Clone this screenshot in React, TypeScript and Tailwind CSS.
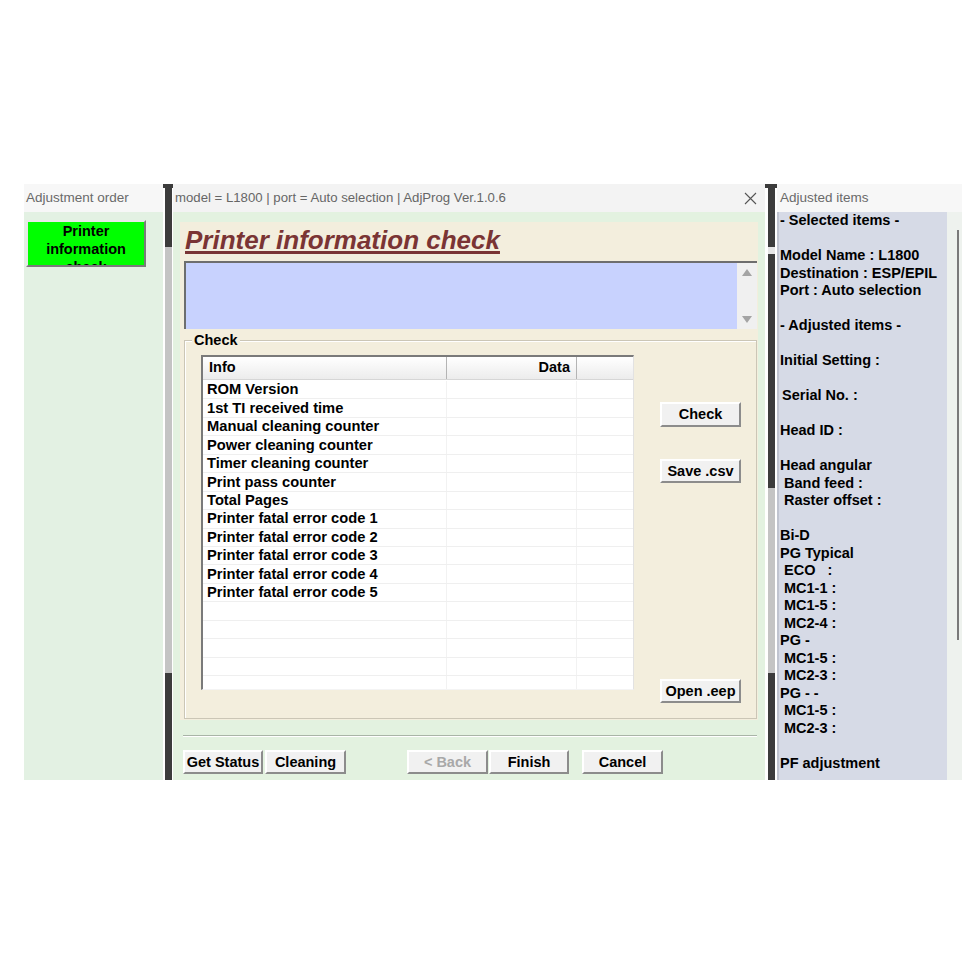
import React from "react";

const ITEMS = [
  "ROM Version",
  "1st TI received time",
  "Manual cleaning counter",
  "Power cleaning counter",
  "Timer cleaning counter",
  "Print pass counter",
  "Total Pages",
  "Printer fatal error code 1",
  "Printer fatal error code 2",
  "Printer fatal error code 3",
  "Printer fatal error code 4",
  "Printer fatal error code 5",
];

// [text, indent px]
const ADJUSTED: [string, number][] = [
  ["- Selected items -", 0],
  ["", 0],
  ["Model Name : L1800", 0],
  ["Destination : ESP/EPIL", 0],
  ["Port : Auto selection", 0],
  ["", 0],
  ["- Adjusted items -", 0],
  ["", 0],
  ["Initial Setting :", 0],
  ["", 0],
  ["Serial No. :", 2],
  ["", 0],
  ["Head ID :", 0],
  ["", 0],
  ["Head angular", 0],
  ["Band feed :", 4],
  ["Raster offset :", 4],
  ["", 0],
  ["Bi-D", 0],
  ["PG Typical", 0],
  ["ECO   :", 4],
  ["MC1-1 :", 4],
  ["MC1-5 :", 4],
  ["MC2-4 :", 4],
  ["PG -", 0],
  ["MC1-5 :", 4],
  ["MC2-3 :", 4],
  ["PG - -", 0],
  ["MC1-5 :", 4],
  ["MC2-3 :", 4],
  ["", 0],
  ["PF adjustment", 0],
];

const FONT = "font-['Liberation_Sans',Arial,sans-serif]";

function Btn({ label, w, className = "", disabled = false }: { label: string; w: string; className?: string; disabled?: boolean }) {
  return (
    <div
      className={`${w} h-[24px] flex items-center justify-center bg-[#f1f1f1] border-2 border-t-white border-l-white border-r-[#8c8c8c] border-b-[#8c8c8c] text-[14.5px] font-bold leading-none ${disabled ? "text-[#a8a8a8]" : "text-black"} ${className}`}
    >
      {label}
    </div>
  );
}

function Splitter({ w, thumb }: { w: string; thumb: boolean }) {
  return (
    <div className={`${w} flex flex-col items-center`}>
      <div className="w-full h-[4px] bg-[#3c3c3c]" />
      <div className="w-[7px] flex-1 flex flex-col">
        <div className="h-[59px] bg-[#3c3c3c]" />
        {thumb ? (
          <>
            <div className="h-[7px] bg-[#e6e6e6]" />
            <div className="h-[234px] bg-[#3c3c3c]" />
            <div className="h-[185px] bg-[#c4c4c4]" />
          </>
        ) : (
          <div className="h-[426px] bg-[#c4c4c4]" />
        )}
        <div className="flex-1 bg-[#3c3c3c]" />
      </div>
    </div>
  );
}

export default function App() {
  return (
    <div className={`w-[980px] h-[980px] bg-white ${FONT}`}>
      <div className="pt-[184px] pl-[24px]">
        <div className="flex w-[938px] h-[596px]">
          {/* Adjustment order */}
          <div className="w-[139px] flex flex-col">
            <div className="h-[28px] bg-[#f7f7f7] flex items-center pl-[2px] text-[13.5px] text-[#6a6a6a]">Adjustment order</div>
            <div className="flex-1 bg-[#e3f1e3] pt-[8px] pl-[2px]">
              <div className="w-[120px] h-[47px] overflow-hidden bg-[#00ff00] border-2 border-t-[#e8e8e8] border-l-[#e8e8e8] border-r-[#7a7a7a] border-b-[#7a7a7a] text-center text-[14.5px] font-bold leading-[18px] text-black">
                Printer
                <br />
                information
                <br />
                check
              </div>
            </div>
          </div>

          <Splitter w="w-[10px]" thumb={false} />

          {/* Main window */}
          <div className="w-[592px] flex flex-col">
            <div className="h-[28px] bg-[#f3f3f3] flex items-center justify-between pl-[2px] pr-[8px]">
              <span className="text-[13.2px] text-[#666666]">model = L1800 | port = Auto selection | AdjProg Ver.1.0.6</span>
              <svg width="13" height="13" viewBox="0 0 13 13">
                <path d="M1 1 L12 12 M12 1 L1 12" stroke="#555" strokeWidth="1.1" />
              </svg>
            </div>
            <div className="flex-1 bg-[#e3f2e0] pt-[10px] flex flex-col">
              <div className="ml-[7px] w-[578px] h-[498px] bg-[#f3eedd] flex flex-col">
                <div className="pl-[5px] pt-[3px] h-[33px]">
                  <span className="text-[26px] leading-[30px] font-bold italic text-[#7a3434] underline decoration-[3px] underline-offset-[2px]">
                    Printer information check
                  </span>
                </div>
                <div className="mt-[6px] ml-[4px] w-[573px] h-[68px] bg-[#c8d2fe] border-t-2 border-l-2 border-[#6e6e6e] flex justify-end">
                  <div className="w-[20px] h-full bg-[#f0f0f0] flex flex-col items-center justify-between py-[6px]">
                    <svg width="10" height="7" viewBox="0 0 10 7"><path d="M5 0 L10 7 L0 7 Z" fill="#a4a4a4" /></svg>
                    <svg width="10" height="7" viewBox="0 0 10 7"><path d="M0 0 L10 0 L5 7 Z" fill="#a4a4a4" /></svg>
                  </div>
                </div>

                {/* Check group */}
                <div className="relative mt-[11px] ml-[4px] w-[573px] h-[379px] border border-[#cbc6b6] shadow-[inset_1px_1px_0_#ffffff] flex">
                  <span className="absolute -top-[9px] left-[7px] px-[2px] bg-[#f3eedd] text-[14.5px] font-bold leading-[17px] text-black">Check</span>
                  <div className="mt-[14px] ml-[16px] w-[433px] h-[335px] bg-white border-t-2 border-l-2 border-[#7a7a7a] border-r border-r-[#e2e2e2] border-b border-b-[#f4f4f4] flex flex-col overflow-hidden">
                    <div className="h-[23px] shrink-0 flex bg-gradient-to-b from-white to-[#ececec] border-b border-[#d6d6d6] text-[14.5px] font-bold text-black">
                      <div className="w-[244px] flex items-center pl-[6px] border-r border-[#b4b4b4]">Info</div>
                      <div className="w-[130px] flex items-center justify-end pr-[6px] border-r border-[#b4b4b4]">Data</div>
                      <div className="flex-1" />
                    </div>
                    <div className="pt-[1px] flex flex-col">
                      {Array.from({ length: 17 }).map((_, i) => (
                        <div key={i} className="h-[18.45px] shrink-0 flex border-b border-[#efefef] text-[14.7px] font-bold text-black leading-none">
                          <div className="w-[244px] flex items-center pl-[4px] border-r border-[#f2f2f2] whitespace-nowrap">{ITEMS[i] ?? ""}</div>
                          <div className="w-[130px] border-r border-[#f2f2f2]" />
                          <div className="flex-1" />
                        </div>
                      ))}
                    </div>
                  </div>
                  <div className="ml-[26px] w-[81px] mt-[61px] flex flex-col">
                    <Btn label="Check" w="w-[81px]" className="h-[25px]" />
                    <Btn label="Save .csv" w="w-[81px]" className="mt-[32px]" />
                    <Btn label="Open .eep" w="w-[81px]" className="mt-[196px]" />
                  </div>
                </div>
              </div>

              <div className="mt-[15px] ml-[10px] w-[574px] border-t border-b border-t-[#a9b5a7] border-b-white" />

              <div className="mt-[13px] pl-[10px] flex">
                <Btn label="Get Status" w="w-[80px]" />
                <Btn label="Cleaning" w="w-[81px]" className="ml-[2px]" />
                <Btn label="< Back" w="w-[81px]" className="ml-[61px]" disabled />
                <Btn label="Finish" w="w-[80px]" className="ml-[1px]" />
                <Btn label="Cancel" w="w-[81px]" className="ml-[13px]" />
              </div>
            </div>
          </div>

          <Splitter w="w-[12px]" thumb={true} />

          {/* Adjusted items */}
          <div className="w-[185px] flex flex-col">
            <div className="h-[28px] bg-[#f7f7f7] flex items-center pl-[3px] text-[13.5px] text-[#6a6a6a]">Adjusted items</div>
            <div className="flex-1 flex">
              <div className="w-[170px] bg-[#d6dae6] border-l-2 border-[#c0c4d0] pl-[1px]">
                {ADJUSTED.map(([t, ind], i) => (
                  <div key={i} className="h-[17.5px] leading-[17.5px] text-[14.5px] font-bold text-black whitespace-pre" style={{ paddingLeft: ind }}>
                    {t}
                  </div>
                ))}
              </div>
              <div className="flex-1 bg-[#eef2ee] pt-[18px] flex justify-end pr-[3px]">
                <div className="w-[2px] h-[410px] bg-[#7a7a7a]" />
              </div>
            </div>
          </div>
        </div>
      </div>
    </div>
  );
}
